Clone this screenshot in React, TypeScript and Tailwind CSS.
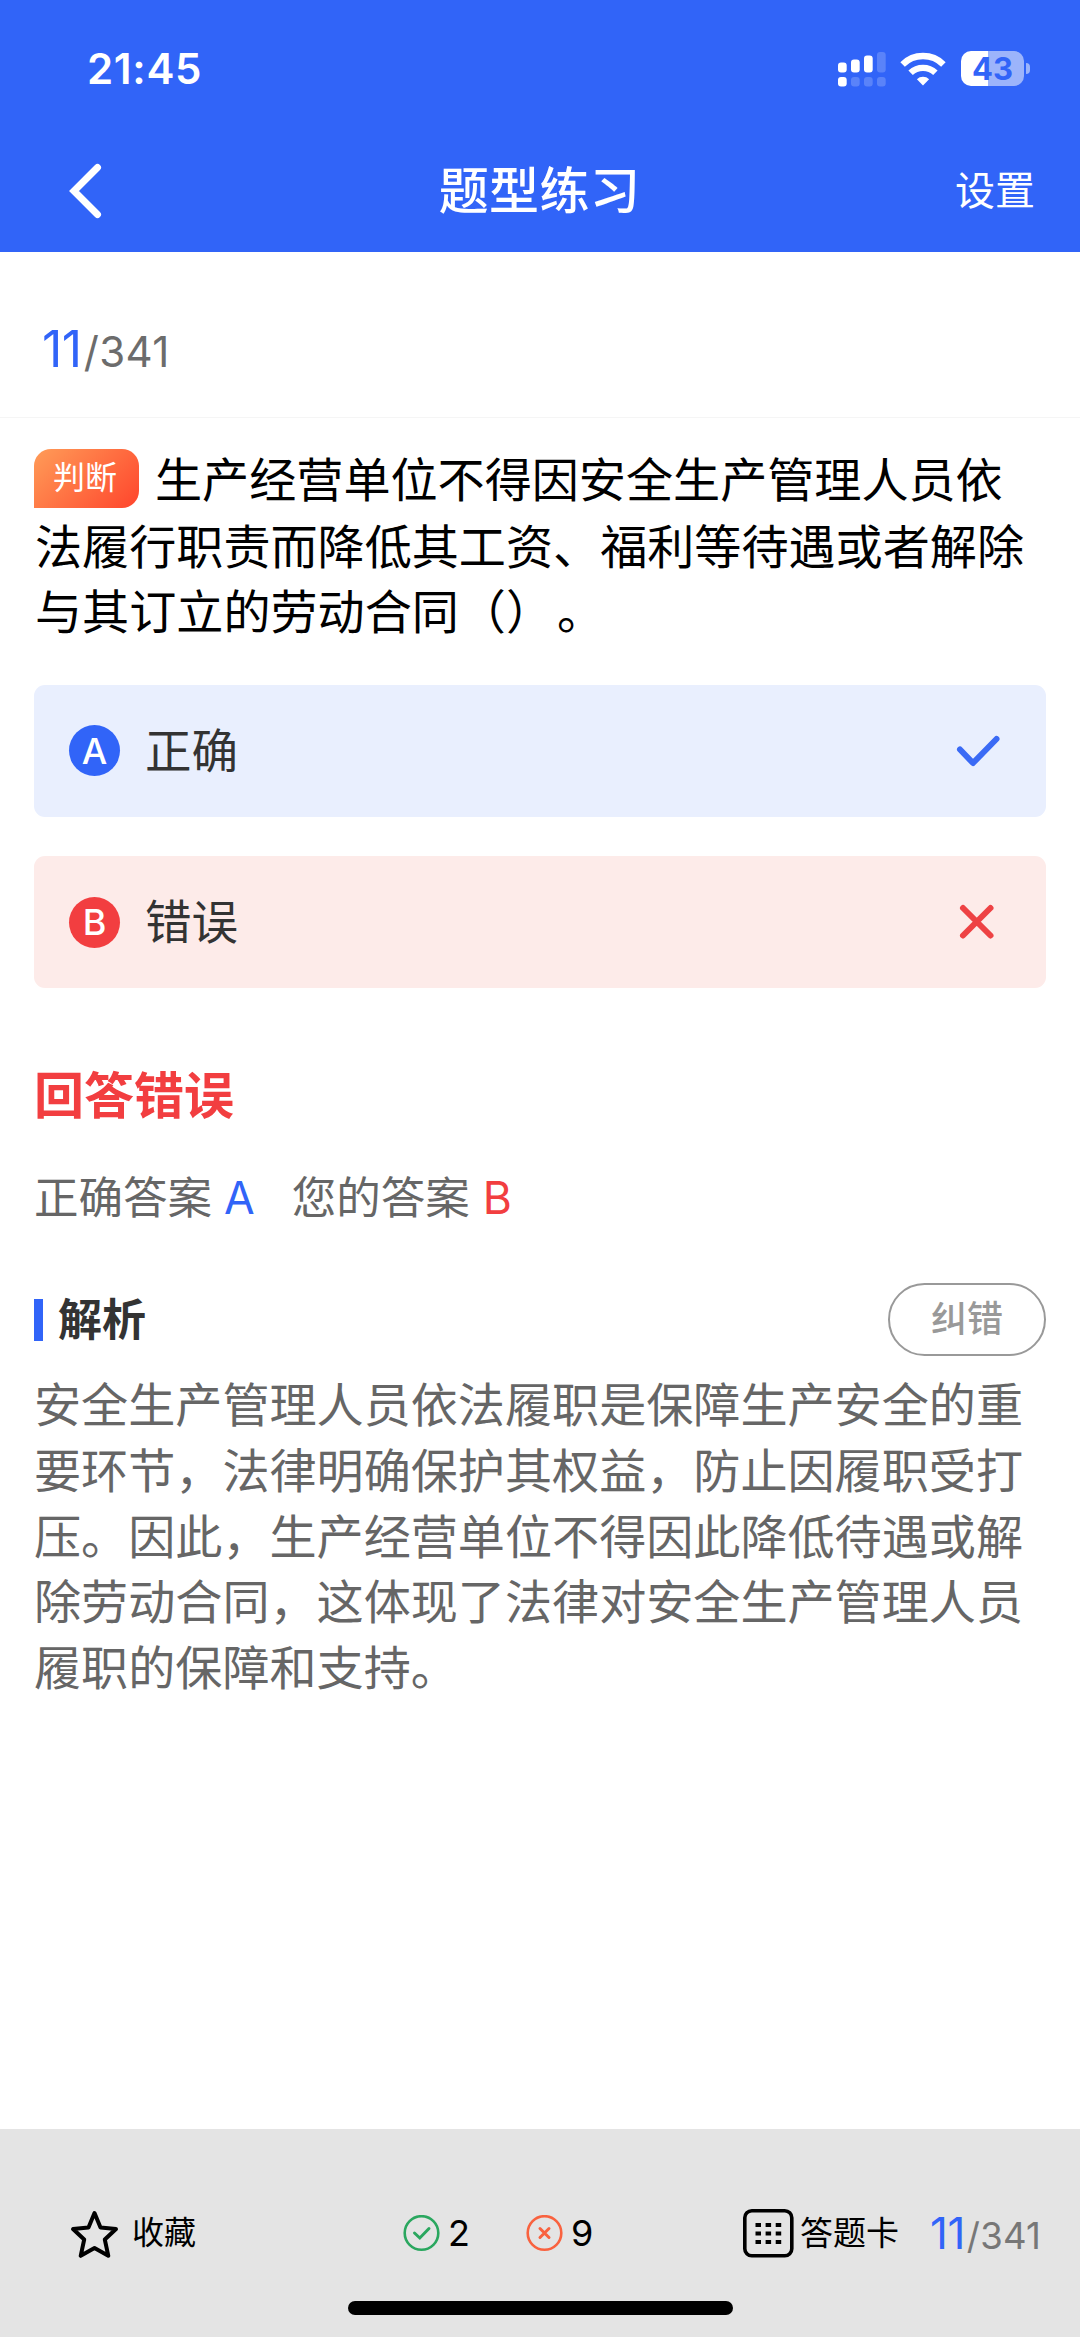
const signal = [
  { h: 10, on: true, dot: true },
  { h: 13, on: true, dot: false },
  { h: 17, on: true, dot: false },
  { h: 20.5, on: false, dot: false },
];

function Signal() {
  return (
    <svg width="48" height="36" viewBox="0 0 48 36" fill="#fff">
      {signal.map((b, i) => (
        <g key={i}>
          <rect x={i * 13} y={21.5 - b.h} width="8.7" height={b.h} rx="3" opacity={b.on ? 1 : 0.2} />
          <rect x={i * 13} y="26" width="8.7" height="9.5" rx="3" opacity={b.dot ? 1 : 0.2} />
        </g>
      ))}
    </svg>
  );
}

function Wifi() {
  return (
    <svg width="46" height="34" viewBox="0 0 46 34" fill="none" stroke="#fff" strokeWidth="6.4">
      <path d="M2.6 12.4A29 29 0 0 1 43.4 12.4" />
      <path d="M10.6 20.8A18 18 0 0 1 35.4 20.8" />
      <path d="M23 33.4L16.9 27.2A8.8 8.8 0 0 1 29.1 27.2Z" fill="#fff" stroke="none" />
    </svg>
  );
}

function Battery() {
  return (
    <div className="flex items-center gap-[2px]">
      <div className="flex h-[35px] w-[63px] items-center justify-center rounded-[10px] bg-[linear-gradient(90deg,#fff_27px,#9cb4fb_27px)] text-[31px] leading-none font-bold text-[#3164f8]">
        43
      </div>
      <div className="h-[11px] w-[4px] rounded-r-full bg-[#9cb4fb]" />
    </div>
  );
}

function Option({ letter, text, good }: { letter: string; text: string; good: boolean }) {
  return (
    <div
      className={
        good
          ? "flex h-[132px] items-center rounded-[11px] bg-[#e9effe] pr-[45px] pl-[35px]"
          : "flex h-[132px] items-center rounded-[11px] bg-[#fdebe9] pr-[45px] pl-[35px]"
      }
    >
      <div
        className={
          good
            ? "flex size-[51px] items-center justify-center rounded-full bg-[#3164f8] text-[36px] leading-none font-medium text-white"
            : "flex size-[51px] items-center justify-center rounded-full bg-[#f23e40] text-[36px] leading-none font-medium text-white"
        }
      >
        {letter}
      </div>
      <div className="ml-[25px] flex-1 text-[46.5px] leading-[60px] text-[#333]">{text}</div>
      <svg width="46" height="46" viewBox="0 0 46 46" fill="none" strokeLinecap="round" strokeLinejoin="round" strokeWidth="6">
        {good ? <path d="M5 21.5L18 35L41.5 11" stroke="#3a6af5" /> : <path d="M8 9L35.5 36.5M35.5 9L8 36.5" stroke="#ee4244" />}
      </svg>
    </div>
  );
}

export default function App() {
  return (
    <div className="flex h-[2337px] w-[1080px] flex-col bg-white font-['Inter','Noto_Sans_CJK_SC',sans-serif] [text-spacing-trim:space-all]">
      <header className="h-[252px] bg-[#3164f8] text-white">
        <div className="flex h-[137px] items-center pr-[50px] pl-[87px]">
          <div className="flex-1 text-[42px] leading-none font-semibold tracking-[0.7px]">21:45</div>
          <div className="flex items-center">
            <Signal />
            <div className="ml-[14px]"><Wifi /></div>
            <div className="ml-[15px]"><Battery /></div>
          </div>
        </div>
        <div className="flex h-[108px] items-center pr-[45px] pl-[66px]">
          <svg width="40" height="60" viewBox="0 0 40 60" fill="none" stroke="#fff" strokeWidth="7">
            <path d="M31.5 6.5L8 30L31.5 53.5" strokeLinecap="round" />
          </svg>
          <h1 className="flex-1 pl-[18px] text-center text-[50px] leading-[60px] font-medium tracking-[0.4px]">题型练习</h1>
          <div className="text-[40px] leading-[60px]">设置</div>
        </div>
      </header>

      <div className="flex h-[166px] items-baseline border-b border-[#f5f5f5] pt-[67px] pl-[42px]">
        <span className="text-[50px] leading-[60px] tracking-[-0.5px] text-[#3164f8]">11</span>
        <span className="ml-[2px] text-[42px] leading-[60px] tracking-[0.4px] text-[#6c6c6c]">/341</span>
      </div>

      <main className="flex-1 px-[34px] pt-[30px]">
        <p className="-mt-px w-[1000px] pl-px text-[47.1px] leading-[65.6px] text-black">
          <span className="relative -top-[6px] -ml-px mr-[16px] inline-flex h-[59px] w-[105px] items-center justify-center rounded-[17px] rounded-bl-none bg-[linear-gradient(135deg,#ff9c58,#ff452c)] pr-[3px] align-middle text-[32px] leading-none text-white">
            判断
          </span>
          生产经营单位不得因安全生产管理人员依<br />法履行职责而降低其工资、福利等待遇或者解除<br />与其订立的劳动合同（）<span className="ml-[4px]">。</span>
        </p>

        <div className="mt-[40px] flex flex-col gap-[39.5px]">
          <Option letter="A" text="正确" good />
          <Option letter="B" text="错误" good={false} />
        </div>

        <h2 className="mt-[78px] text-[50px] leading-[60px] font-bold text-[#f23e40]">回答错误</h2>

        <div className="mt-[42px] flex items-baseline text-[44.5px] leading-[60px] text-[#666]">
          <span>正确答案</span>
          <span className="ml-[12px] text-[#3164f8]">A</span>
          <span className="ml-[37px]">您的答案</span>
          <span className="ml-[13px] text-[#f23e40]">B</span>
        </div>

        <div className="mt-[55px] flex h-[73px] items-center">
          <div className="h-[42px] w-[9px] bg-[#3164f8]" />
          <h3 className="ml-[15px] flex-1 text-[44px] leading-[60px] font-bold text-[#333]">解析</h3>
          <div className="flex h-[73px] w-[158px] items-center justify-center rounded-full border-[2.5px] border-[#999] pb-[2px] text-[36px] leading-none font-medium text-[#999]">
            纠错
          </div>
        </div>

        <p className="mt-[16px] w-[1000px] text-[47.1px] leading-[65.7px] text-[#666]">
          安全生产管理人员依法履职是保障生产安全的重<br />要环节，法律明确保护其权益，防止因履职受打<br />压。因此，生产经营单位不得因此降低待遇或解<br />除劳动合同，这体现了法律对安全生产管理人员<br />履职的保障和支持。
        </p>
      </main>

      <footer className="flex h-[208px] flex-col items-center bg-[#e4e4e4] text-black">
        <div className="mt-[74px] flex h-[60px] w-full items-center pl-[69px] text-[33px] leading-none">
          <svg width="51" height="51" viewBox="0 0 51 51" fill="none" stroke="#000" strokeWidth="4" strokeLinejoin="round">
            <path d="M25.5 5L31.5 19.5L47 21L35.8 31.5L39.3 47.8L25.5 40L11.7 47.8L15.2 31.5L4 21L19.5 19.5Z" />
          </svg>
          <span className="ml-[12px] w-[271px] text-[32px]">收藏</span>
          <svg width="37" height="37" viewBox="0 0 37 37" fill="none" stroke="#2aa75f" strokeWidth="2.6">
            <circle cx="18.5" cy="18" r="16.8" />
            <path d="M11.5 18L16.8 23L26 13.5" strokeWidth="3" strokeLinecap="round" />
          </svg>
          <span className="ml-[8px] w-[78px] text-[36px]">2</span>
          <svg width="37" height="37" viewBox="0 0 37 37" fill="none" stroke="#f9623f" strokeWidth="2.6">
            <circle cx="18.5" cy="18" r="16.8" />
            <path d="M14 13.5L23 22.5M23 13.5L14 22.5" strokeWidth="3" strokeLinecap="round" />
          </svg>
          <span className="ml-[8px] w-[172px] text-[36px]">9</span>
          <svg width="51" height="49" viewBox="0 0 51 49" fill="none" stroke="#000" strokeWidth="3.6">
            <rect x="1.8" y="1.8" width="47" height="45" rx="7" />
            <path d="M12.5 16H39M12.5 24.5H39M12.5 33H39" strokeDasharray="5.5 4.6" strokeWidth="4" />
          </svg>
          <span className="ml-[6px] text-[33px]">答题卡</span>
          <div className="ml-[31px] flex items-baseline">
            <span className="text-[44px] tracking-[-0.5px] text-[#3164f8]">11</span>
            <span className="ml-[2px] text-[36.5px] tracking-[0.2px] text-[#777]">/341</span>
          </div>
        </div>
        <div className="mt-[38px] h-[14px] w-[385px] rounded-full bg-black" />
      </footer>
    </div>
  );
}
